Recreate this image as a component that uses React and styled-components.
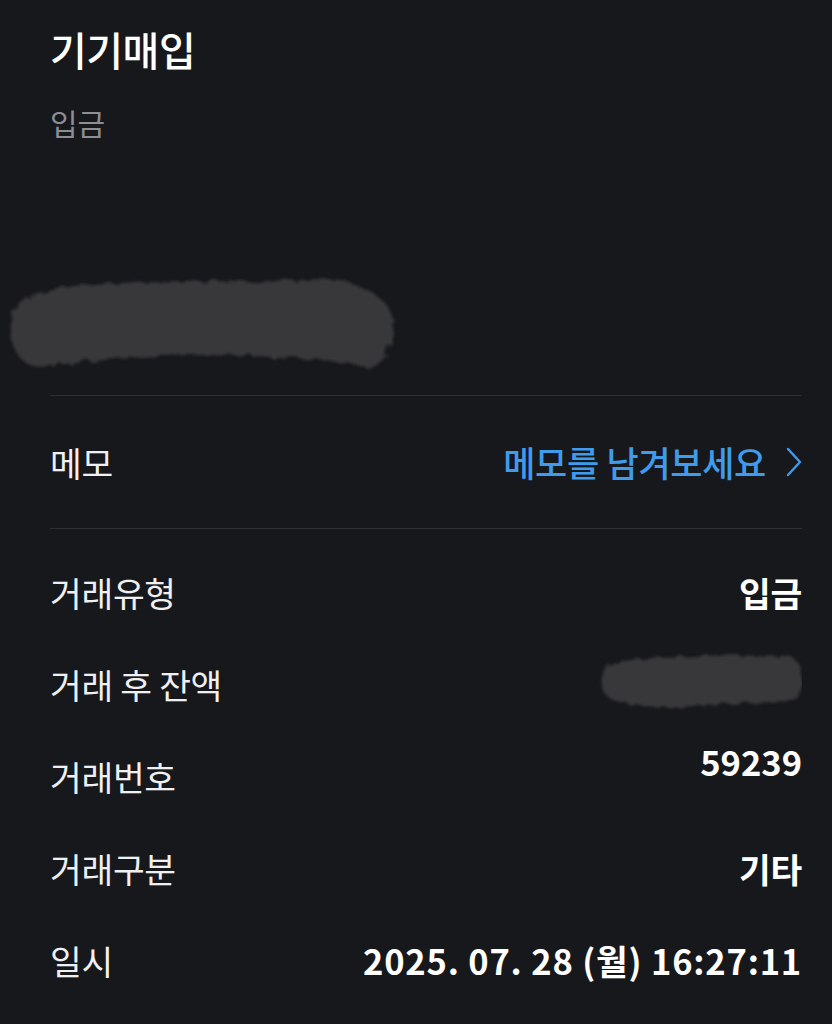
import styled, { createGlobalStyle } from 'styled-components';

const GlobalStyle = createGlobalStyle`
    html, body {
        margin: 0;
        padding: 0;
        background-color: #17181c;
    }
    body {
        font-family: 'Noto Sans CJK KR', 'Noto Sans', sans-serif;
        color: #f2f2f4;
    }
`;

const Page = styled.div`
    width: 832px;
    height: 1024px;
    overflow: hidden;
    background-color: #17181c;
    box-sizing: border-box;
    padding: 0 30px 0 50px;
    display: flex;
    flex-direction: column;
`;

const Header = styled.header`
    display: flex;
    flex-direction: column;
    padding-top: 22px;
`;

const Title = styled.h1`
    margin: 0;
    font-size: 40px;
    font-weight: 500;
    line-height: 54px;
    letter-spacing: -0.5px;
    color: #ffffff;
`;

const Subtitle = styled.div`
    margin-top: 26px;
    font-size: 30px;
    line-height: 40px;
    color: #8d8e93;
`;

const AmountArea = styled.div`
    height: 253px;
    display: flex;
    align-items: flex-end;
    margin-left: -50px;
    padding-bottom: 20px;
    box-sizing: border-box;
`;

const Divider = styled.hr`
    margin: 0;
    border: none;
    height: 1px;
    background-color: #2e2f33;
`;

const MemoRow = styled.div`
    height: 132px;
    display: flex;
    align-items: center;
    justify-content: space-between;
`;

const Label = styled.span`
    font-size: 34.5px;
    line-height: 46px;
    font-weight: 400;
    color: #f0f0f2;
    letter-spacing: -0.3px;
`;

const MemoLink = styled.button`
    display: flex;
    align-items: center;
    gap: 20px;
    padding: 0;
    border: none;
    background: none;
    font-family: inherit;
    font-size: 35px;
    line-height: 46px;
    font-weight: 500;
    color: #3f9cec;
    cursor: pointer;
    letter-spacing: -0.3px;
`;

const DetailList = styled.dl`
    margin: 0;
    padding-top: 17px;
    display: flex;
    flex-direction: column;
`;

const DetailRow = styled.div`
    height: 92px;
    display: flex;
    align-items: center;
    justify-content: space-between;
`;

const Term = styled.dt`
    font-size: 34.5px;
    line-height: 46px;
    color: #f0f0f2;
    letter-spacing: -0.3px;
`;

const Value = styled.dd`
    margin: 0;
    font-size: 34.5px;
    line-height: 46px;
    font-weight: 600;
    color: #ffffff;
    letter-spacing: ${({ $spacing }) => $spacing || '-0.3px'};
    align-self: ${({ $raised }) => ($raised ? 'flex-start' : 'center')};
    margin-top: ${({ $raised }) => ($raised ? '8px' : '0')};
`;

function Redaction({ width, height, d, id }) {
    return (
        <svg width={width} height={height} viewBox={`0 0 ${width} ${height}`}>
            <defs>
                <filter id={id} x="-10%" y="-20%" width="120%" height="140%">
                    <feTurbulence type="fractalNoise" baseFrequency="0.09" numOctaves="2" seed="4" />
                    <feDisplacementMap in="SourceGraphic" scale="9" />
                    <feGaussianBlur stdDeviation="1.4" />
                </filter>
            </defs>
            <path d={d} fill="#38383b" filter={`url(#${id})`} />
        </svg>
    );
}

function Chevron() {
    return (
        <svg width="16" height="30" viewBox="0 0 16 30" fill="none">
            <polyline points="2,2 14,15 2,28" stroke="#3f9cec" strokeWidth="2.4" strokeLinecap="round" strokeLinejoin="round" />
        </svg>
    );
}

const details = [
    { label: '거래유형', value: '입금' },
    { label: '거래 후 잔액', hidden: true },
    { label: '거래번호', value: '59239', raised: true, spacing: '0px' },
    { label: '거래구분', value: '기타' },
    { label: '일시', value: '2025. 07. 28 (월) 16:27:11', spacing: '0.8px' },
];

export default function App() {
    return (
        <>
            <GlobalStyle />
            <Page>
                <Header>
                    <Title>기기매입</Title>
                    <Subtitle>입금</Subtitle>
                </Header>
                <AmountArea>
                    <Redaction
                        id="amount"
                        width={404}
                        height={100}
                        d="M18 28 C40 16 70 10 110 8 L330 5 C350 6 365 12 378 22 C392 32 396 48 392 62 C388 78 382 90 372 92 C330 84 260 80 200 80 C140 80 90 86 40 92 C24 90 14 80 12 66 C10 50 10 36 18 28 Z"
                    />
                </AmountArea>
                <Divider />
                <MemoRow>
                    <Label>메모</Label>
                    <MemoLink>
                        메모를 남겨보세요
                        <Chevron />
                    </MemoLink>
                </MemoRow>
                <Divider />
                <DetailList>
                    {details.map(item => (
                        <DetailRow key={item.label}>
                            <Term>{item.label}</Term>
                            {item.hidden ? (
                                <Value>
                                    <Redaction
                                        id="balance"
                                        width={206}
                                        height={62}
                                        d="M10 18 C30 8 80 6 130 6 L194 8 C202 10 205 20 205 30 C205 42 202 50 194 52 C150 54 110 56 80 58 C50 58 24 56 12 48 C4 40 4 26 10 18 Z"
                                    />
                                </Value>
                            ) : (
                                <Value $raised={item.raised} $spacing={item.spacing}>
                                    {item.value}
                                </Value>
                            )}
                        </DetailRow>
                    ))}
                </DetailList>
            </Page>
        </>
    );
}
